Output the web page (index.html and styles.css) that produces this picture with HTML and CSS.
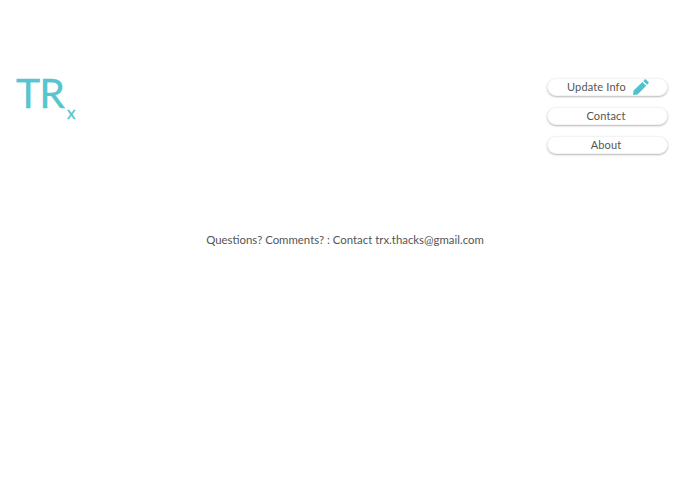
FILE: index.html
```html
<!DOCTYPE html>
<html lang="en">
<head>
<meta charset="utf-8">
<title>TRx</title>
<link rel="stylesheet" href="styles.css">
</head>
<body>
<header class="top">
  <div class="logo"><span class="logo-main">TR</span><span class="logo-sub">x</span></div>
  <nav class="menu">
    <a class="btn btn-icon" href="#"><span>Update Info</span>
      <svg class="pencil" viewBox="0 0 16 16" width="16" height="16" aria-hidden="true"><path d="M11.6.6a1 1 0 0 1 1.4 0l2.4 2.4a1 1 0 0 1 0 1.4l-1.3 1.3-3.8-3.8zM9.4 3L13.2 6.8 4.6 15.4.4 16 0 15.6l.6-4.2z"/></svg>
    </a>
    <a class="btn" href="#">Contact</a>
    <a class="btn" href="#">About</a>
  </nav>
</header>
<p class="note">Questions? Comments? : Contact trx.thacks@gmail.com</p>
</body>
</html>
```
FILE: styles.css
```css
html, body {
  margin: 0;
  background: #fff;
}
body {
  width: 695px;
  height: 494px;
  overflow: hidden;
  font-family: Lato, "Noto Sans", sans-serif;
  color: #555;
}
.top {
  display: flex;
  justify-content: space-between;
  align-items: flex-start;
  padding: 78px 27px 0 16px;
}
.logo {
  display: flex;
  align-items: flex-start;
  color: #56c5cf;
  font-family: Lato, sans-serif;
  -webkit-text-stroke: 0.3px #56c5cf;
}
.logo-main {
  font-size: 41px;
  line-height: 30px;
  letter-spacing: -1px;
}
.logo-sub {
  font-size: 17px;
  line-height: 16px;
  margin-left: 3px;
  margin-top: 27px;
}
.menu {
  display: flex;
  flex-direction: column;
  gap: 11px;
  width: 121px;
}
.btn {
  display: flex;
  align-items: center;
  justify-content: center;
  height: 18px;
  box-sizing: border-box;
  padding: 0 3px 2px 0;
  border-radius: 9px;
  background: #fff;
  border: 1px solid #f3f3f3;
  box-shadow: 0 1px 2px rgba(0, 0, 0, 0.28);
  color: #555;
  font-size: 11px;
  letter-spacing: 0.15px;
  text-decoration: none;
}
.btn-icon {
  justify-content: flex-start;
  padding-left: 19px;
}
.pencil {
  fill: #4fc3cd;
  margin-left: 7px;
  margin-top: 2px;
}
.note {
  margin: 78px 5px 0 0;
  text-align: center;
  font-size: 11.4px;
  line-height: 16px;
}
```
